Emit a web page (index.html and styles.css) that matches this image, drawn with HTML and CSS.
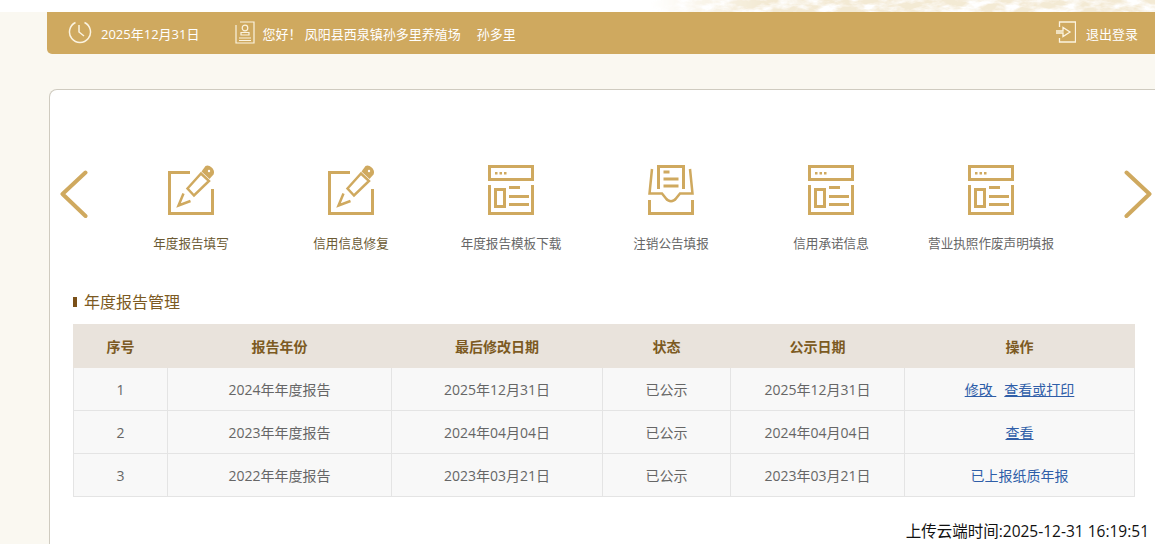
FILE: index.html
```html
<!DOCTYPE html>
<html lang="zh-CN">
<head>
<meta charset="utf-8">
<title>年度报告管理</title>
<link rel="stylesheet" href="styles.css">
</head>
<body>
<svg class="defs" width="0" height="0" aria-hidden="true">
  <filter id="marble" x="0" y="0" width="100%" height="100%">
    <feTurbulence type="fractalNoise" baseFrequency="0.05 0.12" numOctaves="4" seed="11"/>
    <feColorMatrix values="0 0 0 0 .90  0 0 0 0 .82  0 0 0 0 .66  3.2 0 0 0 -1"/>
  </filter>
  <symbol id="i-pen" viewBox="0 0 46 50">
    <path d="M22 7.500H1.500V48.500H44.500V24" fill="none" stroke="currentColor" stroke-width="3"/>
    <path d="M15.500 28.500 10.500 40.500 22.500 36M19.500 23.500 33 8.500 41 16 26 30.500Z" fill="none" stroke="currentColor" stroke-width="2.500"/>
    <path d="M33.500 6.500 37.500 1C41 -1.500 48 4.500 45.500 9.500L41.500 14Z" fill="currentColor"/>
    <circle cx="41" cy="6" r="1.200" fill="#fff"/>
  </symbol>
  <symbol id="i-win" viewBox="0 0 46 50">
    <rect x="1.500" y="1.500" width="43" height="13" fill="none" stroke="currentColor" stroke-width="3"/>
    <path d="M7 7h2.500v2.500H7zM11.500 7H14v2.500h-2.500zM16 7h2.500v2.500H16z" fill="currentColor"/>
    <path d="M1.500 20V48.500H44.500V20" fill="none" stroke="currentColor" stroke-width="3"/>
    <rect x="7.500" y="24.500" width="9" height="17" fill="none" stroke="currentColor" stroke-width="3"/>
    <path d="M21 22.500H32M21 31.500H41M21 39.500H41" fill="none" stroke="currentColor" stroke-width="3"/>
  </symbol>
  <symbol id="i-tray" viewBox="0 0 46 50">
    <path d="M10.500 24V1.500H35.500V24M15.500 7H21.500M15.500 14H30.500M15.500 21H30.500" fill="none" stroke="currentColor" stroke-width="3"/>
    <path d="M4 4 1.500 28.500H14L18 33.500C20.500 37 25.500 37 28 33.500L32 28.500H44.500L42 4" fill="none" stroke="currentColor" stroke-width="2.500"/>
    <path d="M1.500 35V48.500H44.500V35" fill="none" stroke="currentColor" stroke-width="3"/>
  </symbol>
</svg>

<div class="top-strip">
  <svg class="top-texture" width="100%" height="12" aria-hidden="true"><rect class="texture-fill" width="100%" height="12"/></svg>
</div>

<header class="bar">
  <div class="bar-item bar-date">
    <svg class="bar-icon" width="24" height="24" viewBox="0 0 24 24" fill="none" stroke="currentColor" stroke-width="1.500"><path d="M16.500 2.500A10.500 10.500 0 1 1 7.500 2.500"/><path d="M11 5V12L16 16"/></svg>
    <span>2025年12月31日</span>
  </div>
  <div class="bar-item bar-user">
    <svg class="bar-icon" width="20" height="23" viewBox="0 0 20 23" fill="none" stroke="currentColor" stroke-width="1.200"><path d="M5 1H19V22H1V4"/><circle cx="10" cy="7" r="2.800"/><path d="M6 14V11.500H14V14ZM4 17H16M4 19.500H16"/></svg>
    <span>您好！ 凤阳县西泉镇孙多里养殖场</span><span class="bar-name">孙多里</span>
  </div>
  <a class="bar-item bar-logout">
    <svg class="bar-icon" width="20" height="22" viewBox="0 0 20 22" fill="none" stroke="currentColor" stroke-width="1.300"><path d="M3.500 6V1H19.500V21H3.500V17"/><path d="M0 10H7V6.500L14 11 7 15.500V12H0"/></svg>
    <span>退出登录</span>
  </a>
</header>

<main class="card">
  <nav class="carousel">
    <svg class="arrow arrow-prev" width="28" height="48" viewBox="0 0 28 48"><path d="M25.500 2.500 2.500 24 25.500 46" fill="none" stroke="currentColor" stroke-width="4" stroke-linecap="round" stroke-linejoin="round"/></svg>
    <ul class="shortcuts">
      <li class="shortcut brown"><svg class="shortcut-icon" width="46" height="50"><use href="#i-pen"/></svg><span>年度报告填写</span></li>
      <li class="shortcut brown"><svg class="shortcut-icon" width="46" height="50"><use href="#i-pen"/></svg><span>信用信息修复</span></li>
      <li class="shortcut"><svg class="shortcut-icon" width="46" height="50"><use href="#i-win"/></svg><span>年度报告模板下载</span></li>
      <li class="shortcut"><svg class="shortcut-icon" width="46" height="50"><use href="#i-tray"/></svg><span>注销公告填报</span></li>
      <li class="shortcut"><svg class="shortcut-icon" width="46" height="50"><use href="#i-win"/></svg><span>信用承诺信息</span></li>
      <li class="shortcut"><svg class="shortcut-icon" width="46" height="50"><use href="#i-win"/></svg><span>营业执照作废声明填报</span></li>
    </ul>
    <svg class="arrow arrow-next" width="28" height="48" viewBox="0 0 28 48"><path d="M2.500 2.500 25.500 24 2.500 46" fill="none" stroke="currentColor" stroke-width="4" stroke-linecap="round" stroke-linejoin="round"/></svg>
  </nav>

  <section class="manage">
    <h2 class="manage-title">年度报告管理</h2>
    <table class="reports">
      <colgroup>
        <col class="c1"><col class="c2"><col class="c3"><col class="c4"><col class="c5"><col class="c6">
      </colgroup>
      <thead>
        <tr><th>序号</th><th>报告年份</th><th>最后修改日期</th><th>状态</th><th>公示日期</th><th>操作</th></tr>
      </thead>
      <tbody>
        <tr><td>1</td><td>2024年年度报告</td><td>2025年12月31日</td><td>已公示</td><td>2025年12月31日</td><td><a class="link" href="#">修改&nbsp;</a><a class="link link-gap" href="#">查看或打印</a></td></tr>
        <tr><td>2</td><td>2023年年度报告</td><td>2024年04月04日</td><td>已公示</td><td>2024年04月04日</td><td><a class="link" href="#">查看</a></td></tr>
        <tr><td>3</td><td>2022年年度报告</td><td>2023年03月21日</td><td>已公示</td><td>2023年03月21日</td><td><span class="plain-link">已上报纸质年报</span></td></tr>
      </tbody>
    </table>
  </section>
</main>

<div class="stamp">上传云端时间:2025-12-31 16:19:51</div>
</body>
</html>
```

FILE: styles.css
```css
* { box-sizing: border-box; }
html, body { height: 544px; overflow: hidden; }
body {
  margin: 0;
  position: relative;
  background: #faf8f1;
  font-family: "Open Sans", "Noto Sans CJK SC", "Liberation Sans", sans-serif;
  font-size: 13px;
  color: #666;
}
.defs { position: absolute; }
.top-strip {
  height: 12px;
  background: #fff;
  overflow: hidden;
}
.top-texture {
  display: block;
  -webkit-mask-image: linear-gradient(90deg, transparent 650px, #000 760px);
  mask-image: linear-gradient(90deg, transparent 650px, #000 760px);
}
.texture-fill { filter: url(#marble); }
.bar {
  height: 42px;
  margin-left: 47px;
  background: #cfa95f;
  border-radius: 0 0 0 5px;
  display: flex;
  align-items: center;
  color: #fff;
  padding-left: 21px;
  line-height: 20px;
}
.bar-item { display: flex; align-items: center; }
.bar-icon { flex: none; color: #fbf3e0; margin-top: -2px; }
.bar-item span { position: relative; top: 1px; }
.bar-date .bar-icon { margin-right: 9px; }
.bar-user { margin-left: 36px; }
.bar-user .bar-icon { margin-right: 7px; }
.bar-name { margin-left: 16px; }
.bar-logout { margin-left: auto; margin-right: 17px; }
.bar-logout .bar-icon { margin-right: 10px; }

.card {
  margin: 35px -20px 0 49px;
  height: 455px;
  background: #fff;
  border: 1px solid #cfcbc0;
  border-bottom: 0;
  border-radius: 8px 0 0 0;
  padding-top: 75px;
}
.carousel { display: flex; align-items: flex-start; height: 88px; color: #cfa95f; }
.arrow { flex: none; margin-top: 5px; }
.arrow-prev { margin-left: 10px; }
.arrow-next { margin-left: 53px; }
.shortcuts {
  list-style: none;
  margin: 0 0 0 23px;
  padding: 0;
  display: flex;
}
.shortcut {
  width: 160px;
  display: flex;
  flex-direction: column;
  align-items: center;
  gap: 18px;
  font-size: 12.6px;
  line-height: 21px;
  color: #666;
}
.shortcut.brown { color: #6b5a33; }
.shortcut-icon { color: #cfa95f; display: block; }

.manage { margin: 39px 0 0 23px; }
.manage-title {
  display: flex;
  align-items: center;
  gap: 7px;
  margin: 0 0 12px;
  height: 20px;
  font-size: 16px;
  font-weight: 400;
  line-height: 20px;
  color: #7c5a22;
}
.manage-title::before {
  content: "";
  width: 4px;
  height: 10px;
  background: #7a5018;
}
.reports {
  width: 1061px;
  table-layout: fixed;
  border-collapse: collapse;
  font-size: 14px;
  text-align: center;
}
.c1 { width: 94px; }
.c2 { width: 224px; }
.c3 { width: 211px; }
.c4 { width: 128px; }
.c5 { width: 174px; }
.c6 { width: 230px; }
.reports th, .reports td { height: 43px; padding: 0; }
.reports th {
  background: #e9e3dc;
  color: #7c5a22;
  font-weight: 700;
  border: 1px solid #e9e3dc;
}
.reports td {
  background: #f8f8f8;
  border: 1px solid #e4e4e4;
  color: #666;
}
.link { color: #2f5ea8; text-decoration: underline; }
.link-gap { margin-left: 8px; }
.plain-link { color: #2f5ea8; }
.stamp {
  position: absolute;
  right: 6px;
  top: 520px;
  font-size: 15.5px;
  line-height: 22px;
  color: #111;
  white-space: nowrap;
}
```
